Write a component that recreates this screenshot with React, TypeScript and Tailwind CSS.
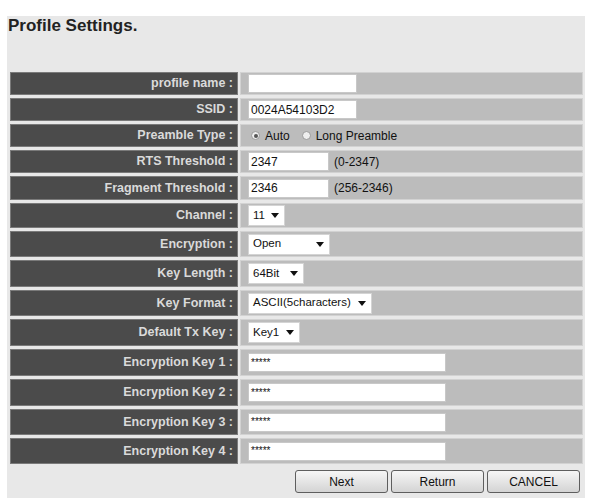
import React from "react";

const font = { fontFamily: '"Liberation Sans", Arial, sans-serif' };

function TextBox({ value, w, small }: { value: string; w: string; small?: boolean }) {
  return (
    <div
      className={`${w} h-[19px] bg-white border border-[#c8c8c8] flex items-center pl-[2px] ${small ? "text-[10px]" : "text-[12px]"} text-[#111] leading-none`}
    >
      {value}
    </div>
  );
}

function Arrow() {
  return (
    <svg width="8" height="5" viewBox="0 0 8 5" className="shrink-0">
      <polygon points="0,0 8,0 4,5" fill="#111" />
    </svg>
  );
}

function Select({ value, w }: { value: string; w: string }) {
  return (
    <div
      className={`${w} h-[21px] bg-white border border-[#d4d4d4] flex items-center justify-between pl-[4px] pr-[5px] text-[11.5px] text-[#111] leading-none`}
    >
      <span>{value}</span>
      <Arrow />
    </div>
  );
}

function Radio({ checked }: { checked?: boolean }) {
  return (
    <span className="inline-flex w-[9px] h-[9px] rounded-full border border-[#9a9a9a] bg-[#eeeeee] items-center justify-center">
      {checked && <span className="w-[4px] h-[4px] rounded-full bg-[#555]" />}
    </span>
  );
}

function Row({ label, h, children }: { label: string; h: string; children?: React.ReactNode }) {
  return (
    <div className={`flex ${h} gap-[2px]`}>
      <div className="w-[228px] bg-[#4b4b4b] border border-[#7a7a7a] flex items-center justify-end pr-[4px] text-[12.5px] font-bold text-[#dadada] whitespace-pre">
        {label}
      </div>
      <div className="flex-1 bg-[#bcbcbc] border border-[#d2d2d2] flex items-center pl-[7px] text-[12px] text-[#111]">
        {children}
      </div>
    </div>
  );
}

function Btn({ label }: { label: string }) {
  return (
    <div className="w-[93px] h-[23px] rounded-[3px] border border-[#5e5e5e] bg-gradient-to-b from-[#f6f6f6] to-[#d4d4d4] flex items-center justify-center text-[12px] text-[#111]">
      {label}
    </div>
  );
}

export default function App() {
  return (
    <div className="w-[601px] h-[504px] bg-white pt-[16px] pl-[7px]" style={font}>
      <div className="w-[578px] h-[482px] bg-[#e8e8e8] pl-[3px] pr-[2px]">
        <div className="h-[56px] -ml-[2px] pt-[1px] text-[17px] font-bold text-[#222] leading-[18px]">
          Profile Settings.
        </div>
        <div className="flex flex-col gap-[3px]">
          <Row label="profile name :" h="h-[23px]">
            <TextBox value="" w="w-[109px]" />
          </Row>
          <Row label="SSID :" h="h-[23px]">
            <TextBox value="0024A54103D2" w="w-[109px]" />
          </Row>
          <Row label="Preamble Type :" h="h-[23px]">
            <div className="flex items-center pl-[3px]">
              <Radio checked />
              <span className="ml-[5px]">Auto</span>
              <span className="ml-[12px] flex items-center"><Radio /></span>
              <span className="ml-[5px]">Long Preamble</span>
            </div>
          </Row>
          <Row label="RTS Threshold :" h="h-[23px]">
            <TextBox value="2347" w="w-[81px]" />
            <span className="ml-[5px]">(0-2347)</span>
          </Row>
          <Row label="Fragment Threshold :" h="h-[24px]">
            <TextBox value="2346" w="w-[81px]" />
            <span className="ml-[5px]">(256-2346)</span>
          </Row>
          <Row label="Channel :" h="h-[25px]">
            <Select value="11" w="w-[37px]" />
          </Row>
          <Row label="Encryption :" h="h-[26px]">
            <Select value="Open" w="w-[82px]" />
          </Row>
          <Row label="Key Length :" h="h-[27px]">
            <Select value="64Bit" w="w-[56px]" />
          </Row>
          <Row label="Key Format :" h="h-[26px]">
            <Select value="ASCII(5characters)" w="w-[124px]" />
          </Row>
          <Row label="Default Tx Key :" h="h-[27px]">
            <Select value="Key1" w="w-[52px]" />
          </Row>
          <Row label="Encryption Key 1 :" h="h-[27px]">
            <TextBox value="*****" w="w-[198px]" small />
          </Row>
          <Row label="Encryption Key 2 :" h="h-[27px]">
            <TextBox value="*****" w="w-[198px]" small />
          </Row>
          <Row label="Encryption Key 3 :" h="h-[26px]">
            <TextBox value="*****" w="w-[198px]" small />
          </Row>
          <Row label="Encryption Key 4 :" h="h-[26px]">
            <TextBox value="*****" w="w-[198px]" small />
          </Row>
        </div>
        <div className="flex justify-end gap-[3px] mt-[6px] pr-[3px]">
          <Btn label="Next" />
          <Btn label="Return" />
          <Btn label="CANCEL" />
        </div>
      </div>
    </div>
  );
}
